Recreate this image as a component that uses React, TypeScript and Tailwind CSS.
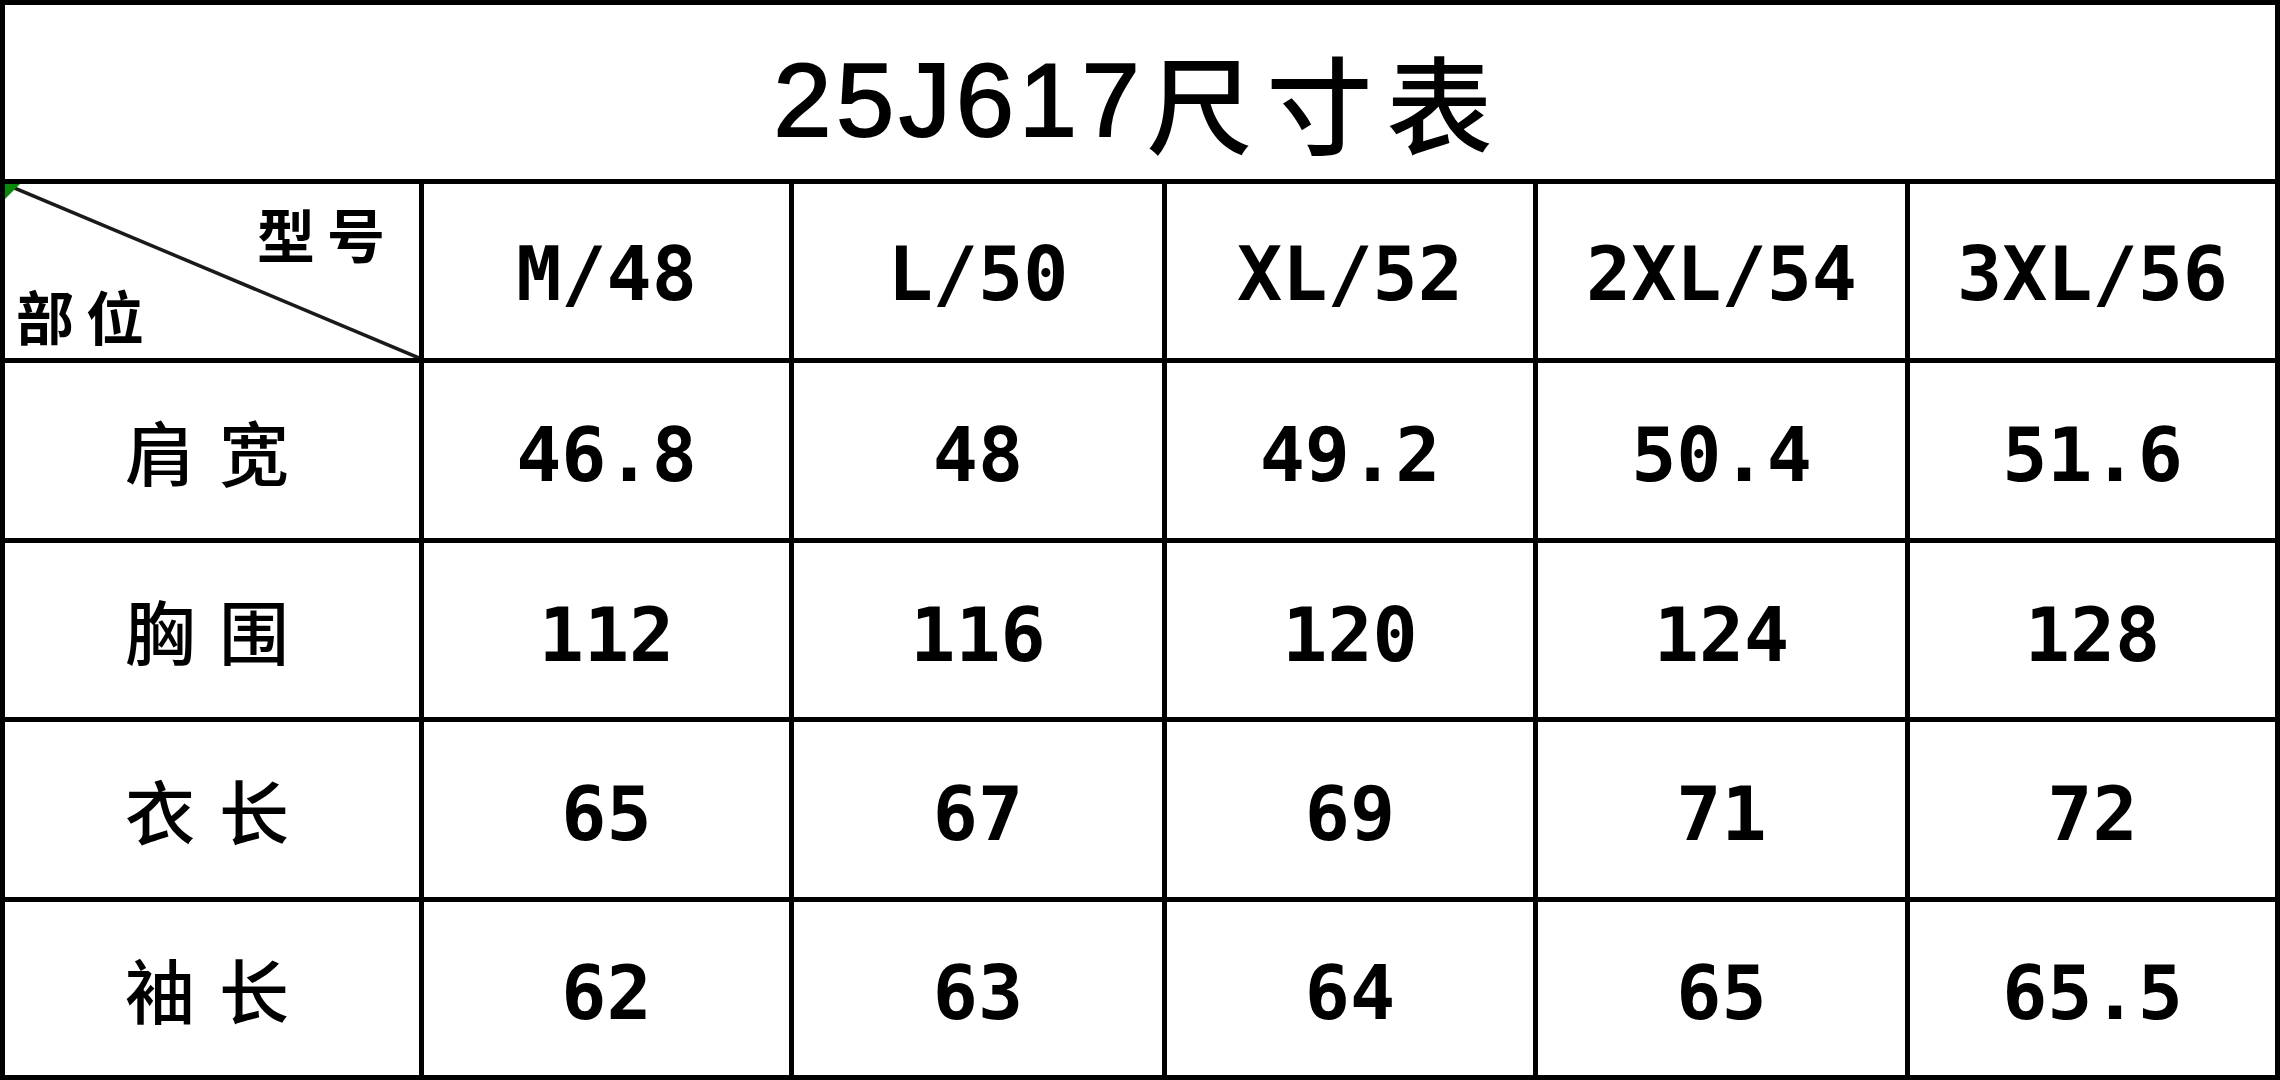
import React from "react";

const sizes = ["M/48", "L/50", "XL/52", "2XL/54", "3XL/56"];
const rows: { label: string; values: string[] }[] = [
  { label: "肩宽", values: ["46.8", "48", "49.2", "50.4", "51.6"] },
  { label: "胸围", values: ["112", "116", "120", "124", "128"] },
  { label: "衣长", values: ["65", "67", "69", "71", "72"] },
  { label: "袖长", values: ["62", "63", "64", "65", "65.5"] },
];

const mono = { fontFamily: '"DejaVu Sans Mono", "Noto Sans CJK SC", monospace' };
const cjk = { fontFamily: '"Noto Sans CJK SC", sans-serif' };

export default function App() {
  return (
    <div className="w-[2280px] h-[1080px] bg-black p-[5px] grid gap-[5px] grid-cols-[414px_365px_368px_366px_367px_365px] grid-rows-[174px_174px_175px_174px_175px_173px] overflow-hidden">
      <div className="col-span-6 bg-white flex items-center justify-center text-black pt-[16px]">
        <span
          className="text-[104px] leading-none tracking-[5px] [-webkit-text-stroke:2px_black]"
          style={{ fontFamily: '"Liberation Sans", "Noto Sans CJK SC", sans-serif' }}
        >
          25J617
        </span>
        <span className="text-[106px] leading-none tracking-[14px] ml-[2px] font-medium" style={cjk}>
          尺寸表
        </span>
      </div>

      <div className="relative bg-white flex flex-col justify-between pt-[20px] pr-[22px] pb-[14px] pl-[11px] text-black">
        <svg
          className="absolute inset-0 w-full h-full"
          viewBox="0 0 100 100"
          preserveAspectRatio="none"
        >
          <line x1="0" y1="0" x2="100" y2="100" stroke="#1a1a1a" strokeWidth="3.5" vectorEffect="non-scaling-stroke" />
        </svg>
        <svg className="absolute left-0 top-0 w-[15px] h-[15px]" viewBox="0 0 16 16">
          <polygon points="0,0 16,0 0,16" fill="#0a8a0a" />
        </svg>
        <span className="relative self-end text-[58px] leading-none tracking-[12px] font-semibold" style={cjk}>
          型号
        </span>
        <span className="relative self-start text-[58px] leading-none tracking-[12px] font-semibold" style={cjk}>
          部位
        </span>
      </div>
      {sizes.map((s) => (
        <div key={s} className="bg-white flex items-center justify-center text-black pt-[6px]">
          <span className="text-[75px] leading-none font-bold" style={mono}>
            {s}
          </span>
        </div>
      ))}

      {rows.map((r) => (
        <React.Fragment key={r.label}>
          <div className="bg-white flex items-center justify-center text-black">
            <span className="text-[70px] leading-none tracking-[24px] pl-[14px] font-medium" style={cjk}>
              {r.label}
            </span>
          </div>
          {r.values.map((v, i) => (
            <div key={i} className="bg-white flex items-center justify-center text-black pt-[10px]">
              <span className="text-[75px] leading-none font-bold" style={mono}>
                {v}
              </span>
            </div>
          ))}
        </React.Fragment>
      ))}
    </div>
  );
}
